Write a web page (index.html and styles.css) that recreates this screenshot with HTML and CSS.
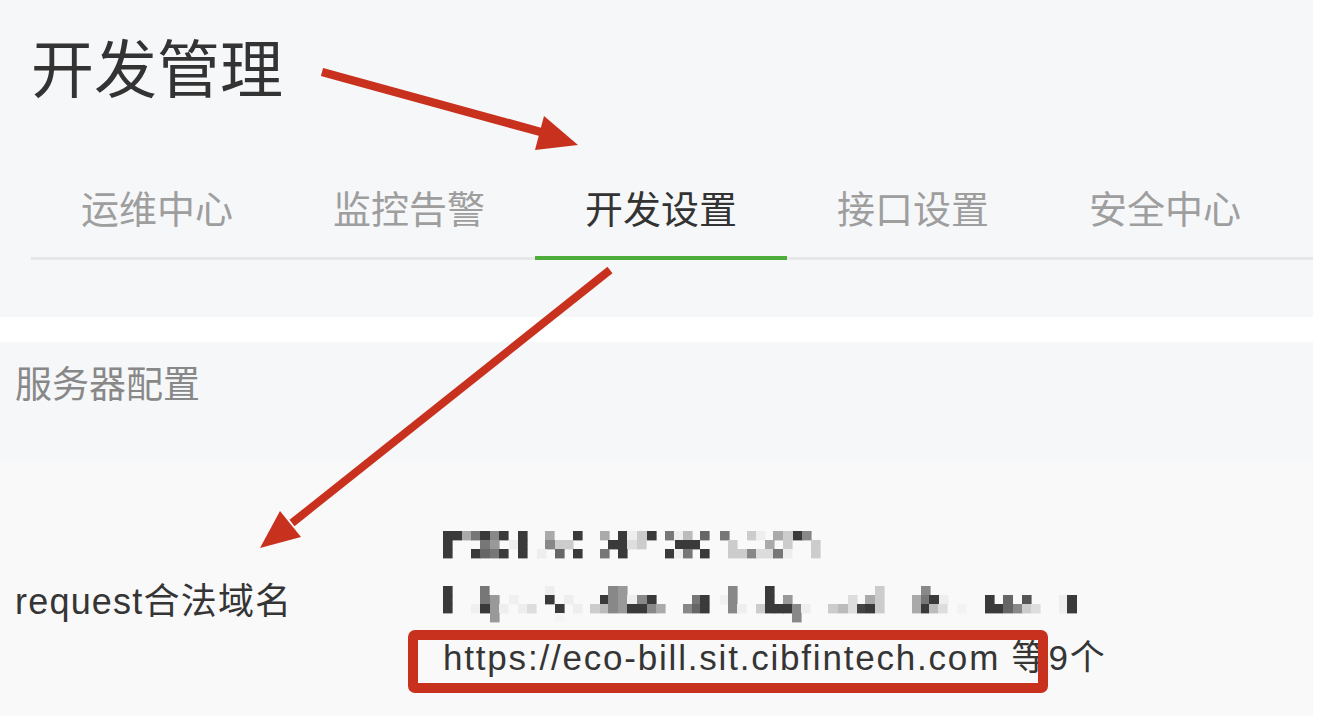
FILE: index.html
```html
<!DOCTYPE html>
<html lang="zh-CN">
<head>
<meta charset="utf-8">
<title>开发管理</title>
<link rel="stylesheet" href="styles.css">
</head>
<body>
<div class="page">
  <header class="hero">
    <h1 class="title">开发管理</h1>
    <nav class="tabs">
      <a class="tab">运维中心</a>
      <a class="tab">监控告警</a>
      <a class="tab active">开发设置</a>
      <a class="tab">接口设置</a>
      <a class="tab">安全中心</a>
    </nav>
  </header>

  <section class="panel">
    <h2 class="panel-head">服务器配置</h2>
    <div class="row">
      <div class="label">request合法域名</div>
      <div class="value">
        <svg class="mosaic m1" width="380" height="28" viewBox="0 0 380 28">
          <g>
            <rect x="0" y="0" width="9.6" height="9.4" fill="#3a3a3a"/><rect x="9" y="0" width="10" height="9.4" fill="#3a3a3a"/><rect x="19" y="0" width="9.6" height="9.4" fill="#aaa"/><rect x="28" y="0" width="9.6" height="9.4" fill="#777"/><rect x="37" y="0" width="10" height="9.4" fill="#3a3a3a"/><rect x="47" y="0" width="9.6" height="9.4" fill="#888"/><rect x="56" y="0" width="9.6" height="9.4" fill="#3a3a3a"/><rect x="75" y="0" width="9.6" height="9.4" fill="#3a3a3a"/><rect x="102" y="0" width="9.6" height="9.4" fill="#aaa"/><rect x="130" y="0" width="9.6" height="9.4" fill="#3a3a3a"/><rect x="157" y="0" width="9.6" height="9.4" fill="#aaa"/><rect x="175" y="0" width="9.6" height="9.4" fill="#3a3a3a"/><rect x="184" y="0" width="10" height="9.4" fill="#eee"/><rect x="194" y="0" width="10" height="9.4" fill="#ccc"/><rect x="204" y="0" width="9.6" height="9.4" fill="#3a3a3a"/><rect x="222" y="0" width="9.6" height="9.4" fill="#777"/><rect x="231" y="0" width="9.6" height="9.4" fill="#eee"/><rect x="240" y="0" width="9.6" height="9.4" fill="#bbb"/><rect x="257" y="0" width="9.6" height="9.4" fill="#666"/><rect x="277" y="0" width="9.6" height="9.4" fill="#777"/><rect x="304" y="0" width="9.6" height="9.4" fill="#ccc"/><rect x="313" y="0" width="9.6" height="9.4" fill="#eee"/><rect x="330" y="0" width="10" height="9.4" fill="#aaa"/><rect x="340" y="0" width="10" height="9.4" fill="#ccc"/><rect x="350" y="0" width="9.6" height="9.4" fill="#3a3a3a"/><rect x="359" y="0" width="9.6" height="9.4" fill="#888"/>
            <rect x="0" y="9" width="9.6" height="9.4" fill="#3a3a3a"/><rect x="37" y="9" width="10" height="9.4" fill="#777"/><rect x="47" y="9" width="9.6" height="9.4" fill="#999"/><rect x="66" y="9" width="9.6" height="9.4" fill="#eee"/><rect x="75" y="9" width="9.6" height="9.4" fill="#3a3a3a"/><rect x="102" y="9" width="10" height="9.4" fill="#888"/><rect x="112" y="9" width="9.6" height="9.4" fill="#ccc"/><rect x="121" y="9" width="9.6" height="9.4" fill="#ccc"/><rect x="165" y="9" width="10" height="9.4" fill="#3a3a3a"/><rect x="175" y="9" width="9.6" height="9.4" fill="#3a3a3a"/><rect x="184" y="9" width="10" height="9.4" fill="#ddd"/><rect x="194" y="9" width="9.6" height="9.4" fill="#ccc"/><rect x="232" y="9" width="25" height="9.4" fill="#3a3a3a"/><rect x="285" y="9" width="9.6" height="9.4" fill="#ccc"/><rect x="322" y="9" width="9.6" height="9.4" fill="#aaa"/><rect x="340" y="9" width="9.6" height="9.4" fill="#ccc"/><rect x="368" y="9" width="9.6" height="9.4" fill="#ccc"/>
            <rect x="0" y="18" width="9.6" height="9.4" fill="#3a3a3a"/><rect x="28" y="18" width="9.6" height="9.4" fill="#3a3a3a"/><rect x="37" y="18" width="10" height="9.4" fill="#666"/><rect x="47" y="18" width="9.6" height="9.4" fill="#777"/><rect x="56" y="18" width="9.6" height="9.4" fill="#3a3a3a"/><rect x="75" y="18" width="9.6" height="9.4" fill="#3a3a3a"/><rect x="94" y="18" width="9.6" height="9.4" fill="#eee"/><rect x="112" y="18" width="9.6" height="9.4" fill="#666"/><rect x="130" y="18" width="9.6" height="9.4" fill="#3a3a3a"/><rect x="157" y="18" width="9.6" height="9.4" fill="#777"/><rect x="175" y="18" width="9.6" height="9.4" fill="#3a3a3a"/><rect x="222" y="18" width="9.6" height="9.4" fill="#3a3a3a"/><rect x="231" y="18" width="9.6" height="9.4" fill="#eee"/><rect x="240" y="18" width="9.6" height="9.4" fill="#777"/><rect x="257" y="18" width="9.6" height="9.4" fill="#3a3a3a"/><rect x="285" y="18" width="19" height="9.4" fill="#ccc"/><rect x="304" y="18" width="9.6" height="9.4" fill="#888"/><rect x="313" y="18" width="9.6" height="9.4" fill="#ddd"/><rect x="322" y="18" width="9.6" height="9.4" fill="#ddd"/><rect x="330" y="18" width="10" height="9.4" fill="#777"/><rect x="340" y="18" width="9.6" height="9.4" fill="#eee"/><rect x="368" y="18" width="9.6" height="9.4" fill="#ccc"/>
          </g>
        </svg>
        <svg class="mosaic m2" width="640" height="37" viewBox="0 0 640 37">
          <g>
            <rect x="0" y="0" width="9.6" height="9.4" fill="#3a3a3a"/><rect x="37" y="0" width="9.6" height="9.4" fill="#777"/><rect x="102" y="0" width="9.6" height="9.4" fill="#eee"/><rect x="165" y="0" width="10" height="9.4" fill="#888"/><rect x="175" y="0" width="9.6" height="9.4" fill="#999"/><rect x="285" y="0" width="9.6" height="9.4" fill="#888"/><rect x="322" y="0" width="9.6" height="9.4" fill="#3a3a3a"/><rect x="432" y="0" width="9.6" height="9.4" fill="#ccc"/><rect x="478" y="0" width="9.6" height="9.4" fill="#888"/>
            <rect x="0" y="9" width="9.6" height="9.4" fill="#3a3a3a"/><rect x="37" y="9" width="10" height="9.4" fill="#777"/><rect x="47" y="9" width="9.6" height="9.4" fill="#999"/><rect x="66" y="9" width="9.6" height="9.4" fill="#f0f0f0"/><rect x="102" y="9" width="9.6" height="9.4" fill="#3a3a3a"/><rect x="121" y="9" width="9.6" height="9.4" fill="#eee"/><rect x="157" y="9" width="8" height="9.4" fill="#3a3a3a"/><rect x="165" y="9" width="10" height="9.4" fill="#888"/><rect x="175" y="9" width="9.6" height="9.4" fill="#999"/><rect x="184" y="9" width="10" height="9.4" fill="#eee"/><rect x="194" y="9" width="10" height="9.4" fill="#888"/><rect x="204" y="9" width="9.6" height="9.4" fill="#3a3a3a"/><rect x="249" y="9" width="8" height="9.4" fill="#777"/><rect x="257" y="9" width="9.6" height="9.4" fill="#3a3a3a"/><rect x="277" y="9" width="8" height="9.4" fill="#f0f0f0"/><rect x="285" y="9" width="9.6" height="9.4" fill="#888"/><rect x="322" y="9" width="9.6" height="9.4" fill="#3a3a3a"/><rect x="340" y="9" width="9.6" height="9.4" fill="#999"/><rect x="405" y="9" width="9.6" height="9.4" fill="#ddd"/><rect x="422" y="9" width="10" height="9.4" fill="#aaa"/><rect x="432" y="9" width="9.6" height="9.4" fill="#ccc"/><rect x="469" y="9" width="9.6" height="9.4" fill="#aaa"/><rect x="478" y="9" width="8" height="9.4" fill="#777"/><rect x="486" y="9" width="10" height="9.4" fill="#3a3a3a"/><rect x="496" y="9" width="9.6" height="9.4" fill="#eee"/><rect x="542" y="9" width="9.6" height="9.4" fill="#3a3a3a"/><rect x="560" y="9" width="10" height="9.4" fill="#666"/><rect x="579" y="9" width="9.6" height="9.4" fill="#555"/><rect x="616" y="9" width="8" height="9.4" fill="#eee"/><rect x="624" y="9" width="10" height="9.4" fill="#3a3a3a"/>
            <rect x="0" y="18" width="9.6" height="9.4" fill="#3a3a3a"/><rect x="28" y="18" width="9.6" height="9.4" fill="#f0f0f0"/><rect x="37" y="18" width="10" height="9.4" fill="#3a3a3a"/><rect x="47" y="18" width="9.6" height="9.4" fill="#999"/><rect x="56" y="18" width="9.6" height="9.4" fill="#eee"/><rect x="75" y="18" width="9.6" height="9.4" fill="#eee"/><rect x="84" y="18" width="9.6" height="9.4" fill="#ddd"/><rect x="112" y="18" width="9.6" height="9.4" fill="#3a3a3a"/><rect x="130" y="18" width="9.6" height="9.4" fill="#eee"/><rect x="147" y="18" width="10" height="9.4" fill="#ccc"/><rect x="157" y="18" width="8" height="9.4" fill="#bbb"/><rect x="165" y="18" width="10" height="9.4" fill="#888"/><rect x="175" y="18" width="9.6" height="9.4" fill="#999"/><rect x="184" y="18" width="10" height="9.4" fill="#3a3a3a"/><rect x="194" y="18" width="10" height="9.4" fill="#3a3a3a"/><rect x="204" y="18" width="9.6" height="9.4" fill="#888"/><rect x="213" y="18" width="9.6" height="9.4" fill="#aaa"/><rect x="240" y="18" width="9.6" height="9.4" fill="#888"/><rect x="249" y="18" width="8" height="9.4" fill="#666"/><rect x="257" y="18" width="9.6" height="9.4" fill="#3a3a3a"/><rect x="285" y="18" width="9.6" height="9.4" fill="#888"/><rect x="294" y="18" width="9.6" height="9.4" fill="#eee"/><rect x="313" y="18" width="9.6" height="9.4" fill="#ccc"/><rect x="322" y="18" width="9.6" height="9.4" fill="#3a3a3a"/><rect x="331" y="18" width="9.6" height="9.4" fill="#3a3a3a"/><rect x="340" y="18" width="9.6" height="9.4" fill="#3a3a3a"/><rect x="349" y="18" width="9.6" height="9.4" fill="#888"/><rect x="358" y="18" width="9.6" height="9.4" fill="#eee"/><rect x="385" y="18" width="10" height="9.4" fill="#ccc"/><rect x="395" y="18" width="10" height="9.4" fill="#bbb"/><rect x="405" y="18" width="9.6" height="9.4" fill="#ddd"/><rect x="414" y="18" width="8" height="9.4" fill="#444"/><rect x="422" y="18" width="10" height="9.4" fill="#3a3a3a"/><rect x="432" y="18" width="9.6" height="9.4" fill="#ccc"/><rect x="469" y="18" width="9.6" height="9.4" fill="#aaa"/><rect x="478" y="18" width="8" height="9.4" fill="#3a3a3a"/><rect x="486" y="18" width="9.6" height="9.4" fill="#bbb"/><rect x="495" y="18" width="9.6" height="9.4" fill="#ddd"/><rect x="514" y="18" width="9.6" height="9.4" fill="#f3f3f3"/><rect x="542" y="18" width="18" height="9.4" fill="#3a3a3a"/><rect x="560" y="18" width="10" height="9.4" fill="#666"/><rect x="570" y="18" width="9.6" height="9.4" fill="#888"/><rect x="579" y="18" width="9.6" height="9.4" fill="#ccc"/><rect x="588" y="18" width="9.6" height="9.4" fill="#ddd"/><rect x="616" y="18" width="8" height="9.4" fill="#eee"/><rect x="624" y="18" width="10" height="9.4" fill="#3a3a3a"/>
            <rect x="47" y="27" width="9.6" height="9.4" fill="#999"/><rect x="112" y="27" width="9.6" height="9.4" fill="#f5f5f5"/><rect x="349" y="27" width="9.6" height="9.4" fill="#888"/>
          </g>
        </svg>
        <div class="url"><span class="link">https://eco-bill.sit.cibfintech.com</span> 等9个<span class="mark"></span></div>
      </div>
    </div>
  </section>

  <svg class="arrows" width="1344" height="716" viewBox="0 0 1344 716">
    <line x1="322" y1="72" x2="548" y2="134" stroke="#c9311f" stroke-width="8.5"/>
    <polygon points="544,116 535,150 578,145" fill="#c9311f"/>
    <line x1="610" y1="270" x2="292" y2="523" stroke="#c9311f" stroke-width="8"/>
    <polygon points="280,511 301,537 260,548" fill="#c9311f"/>
  </svg>
</div>
</body>
</html>
```
FILE: styles.css
```css
html, body {
  margin: 0;
  padding: 0;
  background: #ffffff;
}

body {
  font-family: "Liberation Sans", "Noto Sans CJK SC", sans-serif;
  color: #353535;
}

.page {
  position: relative;
  width: 1344px;
  height: 716px;
  overflow: hidden;
}

/* ---------- header ---------- */
.hero {
  width: 1313px;
  height: 317px;
  box-sizing: border-box;
  background: #f6f7f9;
  padding: 33px 0 0 31px;
}

.title {
  margin: 0;
  font: 400 63px/63px "Noto Sans CJK SC", sans-serif;
  color: #333333;
}

.tabs {
  display: flex;
  margin-top: 92px;
  border-bottom: 3px solid #e6e7e9;
}

.tab {
  width: 252px;
  text-align: center;
  font: 400 38px/38px "Noto Sans CJK SC", sans-serif;
  color: #9e9e9e;
  padding-bottom: 30px;
}

.tab.active {
  color: #333333;
  border-bottom: 4px solid #4dac3a;
  margin-bottom: -3px;
}

/* ---------- panel ---------- */
.panel {
  margin-top: 25px;
  width: 1313px;
}

.panel-head {
  margin: 0;
  height: 118px;
  box-sizing: border-box;
  background: #f6f7f9;
  padding: 22px 0 0 15px;
  font: 400 37px/37px "Noto Sans CJK SC", sans-serif;
  color: #888888;
}

.row {
  display: flex;
  align-items: center;
  background: #f9f9f9;
  padding: 71px 0 40px 15px;
}

.label {
  width: 428px;
  flex: none;
  font-size: 36px;
  line-height: 40px;
  letter-spacing: 1.2px;
  margin-top: -6px;
  color: #353535;
}

.value {
  display: flex;
  flex-direction: column;
  align-items: flex-start;
}

.mosaic {
  display: block;
}

.m1 {
  margin-bottom: 27px;
}

.url {
  position: relative;
  margin-top: 15px;
  font-size: 35px;
  line-height: 40px;
  letter-spacing: 1.8px;
  white-space: nowrap;
  color: #353535;
}

.mark {
  position: absolute;
  left: -35px;
  top: -8px;
  width: 640px;
  height: 63px;
  box-sizing: border-box;
  border: 10px solid #c9311f;
  border-radius: 7px;
}

/* ---------- annotation arrows ---------- */
.arrows {
  position: absolute;
  left: 0;
  top: 0;
  pointer-events: none;
}
```
